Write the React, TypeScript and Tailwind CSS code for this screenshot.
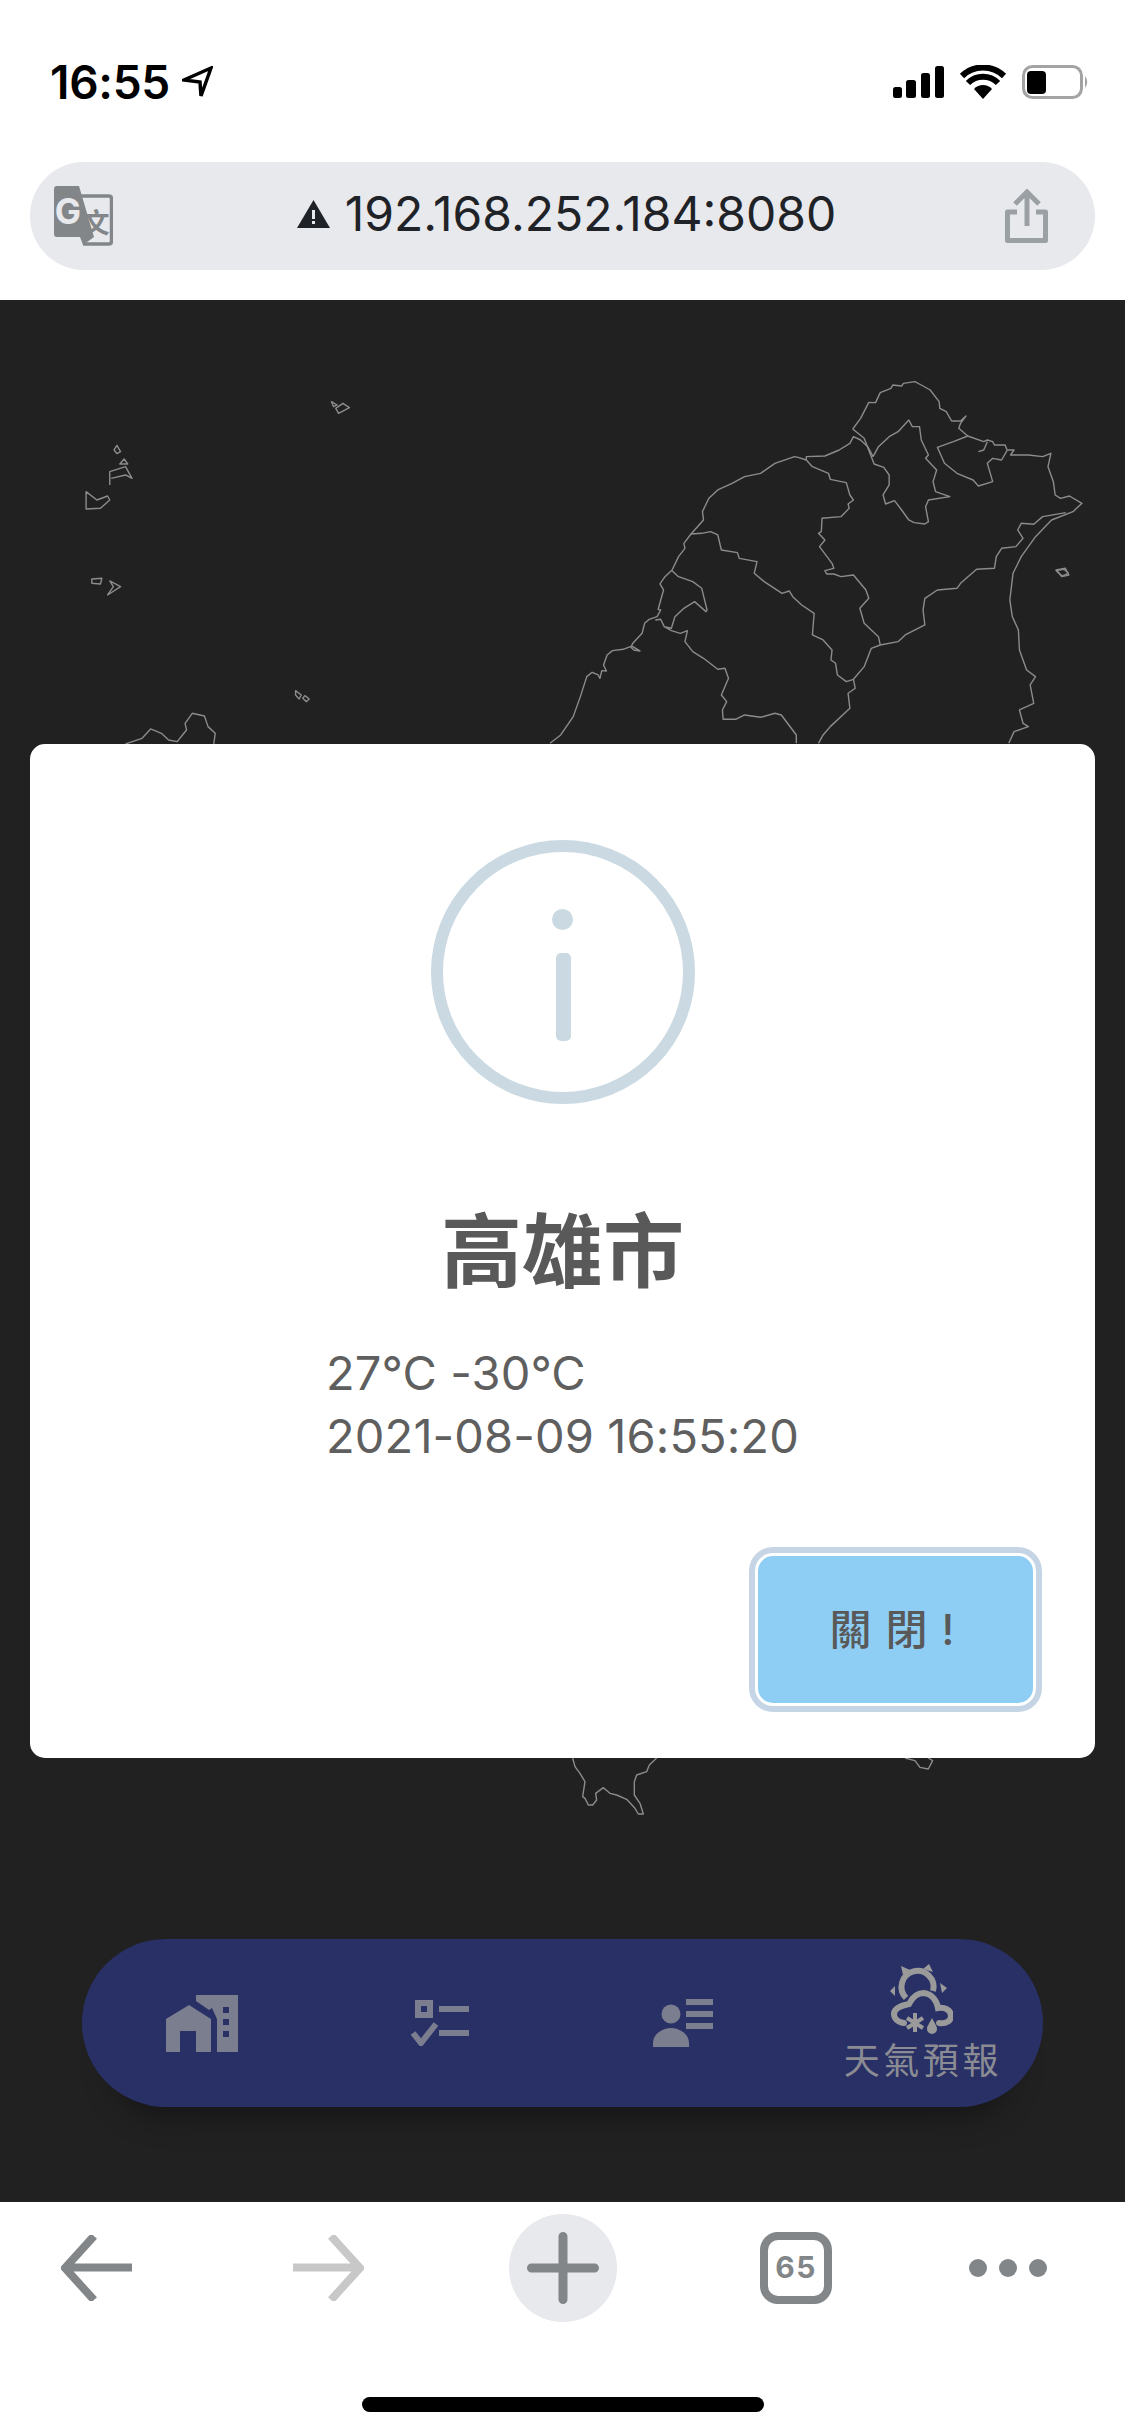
const west =
  "M0 1150 30 1125 65 1070 85 1010 103 950 118 937 135 945 140 955 145 932 158 933 150 915 160 885 175 872 205 868 225 860 235 870 252 873 228 858 232 850 258 820 265 790 278 778 300 770 310 750 303 748 318 690 308 672 322 650 342 630 360 590 378 565 375 550 395 522 430 480 427 455 445 415 470 390 510 370 545 350 590 340 630 310 685 290 695 292 718 300 718 290 770 288 810 270 840 250 850 230 870 240 890 260 905 290";
const northEast =
  "M848 207 870 175 893 127 912 128 925 98 955 85 960 75 985 78 990 70 1022 65 1040 75 1065 90 1090 125 1092 145 1110 155 1125 183 1150 183 1165 168 1150 190 1145 205 1170 228 1215 245 1225 240 1240 245 1245 255 1275 255 1280 270 1300 270 1290 285 1340 285 1380 290 1403 280 1395 320 1410 365 1415 405 1430 415 1455 408 1490 430 1465 455 1405 480 1360 530 1320 590 1297 640 1288 720 1295 770 1312 810 1315 870 1335 930 1360 950 1345 975 1355 1030 1315 1050 1325 1090 1340 1100 1300 1115 1285 1150";
const yilanLine =
  "M1445 458 1380 470 1355 493 1320 490 1310 510 1325 535 1305 560 1265 565 1250 590 1245 625 1195 628 1150 670 1140 685 1085 690 1050 715 1045 750 1050 795 995 825 975 845 925 855 900 865 880 920 850 958 830 965 805 945 800 910 787 900 790 870 765 840 735 825 740 760 705 735 680 710 670 693 650 700 600 665 572 640 580 605 530 595 525 578 480 570 470 525 450 515 425 520 395 522";
const hsinchuLine =
  "M718 300 735 320 780 340 785 358 830 368 840 405 850 420 835 432 838 445 815 470 762 475 760 515 752 520 770 540 755 560 790 610 795 625 770 632 775 642 795 642 815 650 850 645 885 690 893 715 868 745 880 790 920 830 925 855";
const taipei =
  "M905 290 920 260 950 230 975 215 1005 180 1015 200 1035 200 1040 240 1060 285 1052 295 1083 330 1073 365 1080 395 1120 410 1060 420 1052 440 1060 485 1050 492 1020 488 1005 480 985 450 965 422 940 432 933 405 950 375 950 345 935 322 908 312 900 290 880 235 848 207";
const keelung =
  "M1170 228 1130 245 1085 262 1105 310 1140 340 1185 360 1200 378 1240 365 1225 310 1240 295 1265 300 1280 272 M1225 245 1215 270 1200 275";
const miaoli =
  "M342 632 360 650 400 665 425 685 440 750 437 755 405 725 375 745 350 770 340 805 320 800 310 778 295 780 M320 800 340 812 365 820 385 812 378 845 400 875 430 895 470 928 490 925 500 955 480 1005 495 1025 483 1050 485 1078 520 1078 545 1065 590 1072 630 1060 648 1065 690 1125 690 1150 M850 958 855 985 835 1000 840 1045 785 1100 765 1125 752 1150";
const islands =
  "M462 305 470 315 465 320Z M478 310 487 323 472 340 468 325Z M163 436 168 455 163 461 159 450Z M173 477 178 492 167 492Z M153 555 153 515 175 500 184 535 175 525 155 535 M120 575 135 600 150 588 153 600 140 625 120 627Z M128 837 142 835 140 852 128 850Z M153 843 168 860 150 885 158 860Z M412 1172 420 1185 417 1197 412 1185Z M425 1187 431 1197 427 1205 422 1195Z M1472 810 1485 805 1490 825 1480 830Z M175 1332 198 1315 210 1287 225 1300 235 1320 247 1325 260 1290 258 1270 268 1240 285 1248 290 1280 300 1300 298 1332";
const south =
  "M98 54 105 80 120 100 135 125 128 170 135 175 145 195 158 195 170 180 167 160 190 143 210 160 230 165 260 178 285 205 295 222 310 222 300 190 283 165 283 125 290 105 320 95 328 75 350 54 M1095 54 1125 62 1140 82 1165 87 1178 62 1165 54";

function TaiwanMap() {
  return (
    <svg viewBox="0 300 1125 1902" className="absolute inset-0 h-full w-full" fill="none" stroke="#8c8c8c" strokeWidth="1.4" strokeLinejoin="round">
      <g transform="translate(550 360) scale(.357 .3333)">
        {[west, northEast, yilanLine, hsinchuLine, taipei, keelung, miaoli].map((d) => (
          <path key={d} d={d} vectorEffect="non-scaling-stroke" />
        ))}
        <path d="M1418 632 1440 628 1452 640 1435 648Z" vectorEffect="non-scaling-stroke" />
      </g>
      <g transform="translate(0 300) scale(.7174 .3333)">
        <path d={islands} vectorEffect="non-scaling-stroke" />
      </g>
      <g transform="translate(540 1740) scale(.3333)">
        <path d={south} vectorEffect="non-scaling-stroke" />
      </g>
    </svg>
  );
}

function StatusIcons() {
  return (
    <svg width="197" height="34" viewBox="893 65 197 34">
      <rect x="893" y="87" width="9" height="11" rx="2.5" />
      <rect x="906" y="80" width="10" height="18" rx="2.5" />
      <rect x="921" y="73" width="9" height="25" rx="2.5" />
      <rect x="935" y="66" width="9" height="32" rx="2.5" />
      <path d="M962 76a30 30 0 0 1 42 0M968 83a21 21 0 0 1 30 0" fill="none" stroke="#000" strokeWidth="6" />
      <path d="M974 89a12 12 0 0 1 18 0l-9 10z" />
      <rect x="1023.500" y="66.500" width="58" height="31" rx="9" fill="none" stroke="#a3a3a3" strokeWidth="3" />
      <rect x="1027" y="71" width="19" height="23" rx="4" />
      <path d="M1085 76q4.500 6 0 12z" fill="#a3a3a3" />
    </svg>
  );
}

function TranslateIcon() {
  return (
    <svg width="59" height="60" viewBox="0 0 59 60">
      <path d="M27 10H55Q57.500 10 57.500 13V55Q57.500 58 55 58H29" fill="none" stroke="#828689" strokeWidth="3.500" />
      <path d="M3 0H25L40 51 29 59 26 51H3Q0 51 0 48V3Q0 0 3 0Z" fill="#828689" />
      <text x="14" y="38" textAnchor="middle" fontSize="35" fontWeight="700" fill="#e8e9ed" fontFamily="Inter, sans-serif">G</text>
      <text x="42" y="47" textAnchor="middle" fontSize="27" fontWeight="700" fill="#828689" fontFamily="'Noto Sans CJK TC', sans-serif">文</text>
    </svg>
  );
}

function ShareIcon() {
  return (
    <svg width="43" height="54" viewBox="1004 185 43 54" fill="none" stroke="#9aa0a4" strokeWidth="5">
      <path d="M1026 189V222M1014 200 1026 188 1038 200" />
      <path d="M1016 208H1006.500V236.500H1044.500V208H1035" strokeLinejoin="round" />
    </svg>
  );
}

function HomeWorkIcon() {
  return (
    <svg width="72" height="57" viewBox="0 0 72 57" fill="#7a7e8f">
      <path d="M23 10 0 24V57H14V36H30V57H45V24Z" />
      <path
        fillRule="evenodd"
        d="M30 0H72V57H51V24L46 13 43 15 30 6ZM57 12V18H63V12ZM57 24V30H63V24ZM57 36V42H63V36Z"
      />
    </svg>
  );
}

function RuleIcon() {
  return (
    <svg width="60" height="46" viewBox="0 0 60 46" fill="#7a7e8f" className="-translate-x-[2px]">
      <path fillRule="evenodd" d="M5 0H23V18H5ZM11 6V12H17V6Z" />
      <rect x="29" y="6" width="30" height="6" />
      <rect x="29" y="30" width="30" height="6" />
      <path d="M3 33 11 43 26 24" fill="none" stroke="#7a7e8f" strokeWidth="6" />
    </svg>
  );
}

function ContactIcon() {
  return (
    <svg width="60" height="48" viewBox="0 0 60 48" fill="#7a7e8f">
      <circle cx="18" cy="15" r="9.500" />
      <path d="M0 48V44A18 15 0 0 1 36 44V48Z" />
      <rect x="33" y="0" width="27" height="6" />
      <rect x="33" y="12" width="27" height="6" />
      <rect x="33" y="24" width="27" height="6" />
    </svg>
  );
}

function WeatherIcon() {
  return (
    <svg width="64" height="72" viewBox="888 1965 64 72" fill="#9a9a9a" className="-translate-x-[2px]">
      <path d="M900 1968 909 1972 902 1977ZM922 1971 928 1966 932 1974ZM939 1985 946 1990 941 1995ZM889 1993 894 1988 894 1998Z" />
      <path d="M905 2000A16 16 0 1 1 932 1993" fill="none" stroke="#9a9a9a" strokeWidth="6" />
      <path
        d="M903 2025C896 2024 893 2020 893 2016 893 2011 898 2008 908 2006 912 1998 918 1995 923 1995 931 1996 936 2003 937 2010 944 2009 950 2012 950 2018 950 2023 945 2026 938 2025"
        fill="none"
        stroke="#9a9a9a"
        strokeWidth="6"
        strokeLinecap="round"
      />
      <path d="M914 2015V2034M906 2020 922 2030M922 2020 906 2030" stroke="#9a9a9a" strokeWidth="4" fill="none" />
      <path d="M931 2020C928 2026 926 2028 926 2031A5 5 0 0 0 936 2031C936 2028 934 2026 931 2020Z" />
    </svg>
  );
}

function ToolbarArrow({ flip, color }: { flip?: boolean; color: string }) {
  return (
    <svg width="71" height="66" viewBox="0 0 71 66" fill="none" stroke={color} strokeWidth="8" className={flip ? "-scale-x-100" : ""}>
      <path d="M71 32.500H6M33 1 4 33l29 32" strokeWidth="8" />
    </svg>
  );
}

export default function App() {
  return (
    <div className="flex h-[2436px] w-[1125px] flex-col overflow-hidden bg-white font-['Inter','Noto_Sans_CJK_TC',sans-serif]">
      {/* status bar + address bar */}
      <header className="h-[300px] shrink-0 bg-white">
        <div className="flex h-[162px] items-start justify-between pl-[50px] pr-[35px] pt-[65px]">
          <div className="flex items-center gap-[12px]">
            <span className="text-[46px] font-semibold leading-[34px] tracking-[-0.3px] text-black">16:55</span>
            <svg width="31" height="32" viewBox="0 0 31 32" fill="none" stroke="#000" strokeWidth="3.500">
              <path d="M29 2 2 14 18 16 19 30Z" />
            </svg>
          </div>
          <StatusIcons />
        </div>
        <div className="mx-[30px] flex h-[108px] items-center justify-between rounded-full bg-[#e8e9ed] pl-[24px] pr-[47px]">
          <TranslateIcon />
          <div className="flex flex-1 -translate-y-[2px] items-center justify-center gap-[15px] pl-[15px]">
            <svg width="33" height="28" viewBox="0 0 33 28">
              <path d="M16.500 0 33 28H0Z" fill="#1f2328" />
              <rect x="15" y="10" width="3" height="9" fill="#e8e9ed" />
              <rect x="15" y="21" width="3" height="3" fill="#e8e9ed" />
            </svg>
            <span className="text-[48px] leading-[56px] text-[#1f2328]">192.168.252.184:8080</span>
          </div>
          <ShareIcon />
        </div>
      </header>

      <main className="relative flex h-[1902px] shrink-0 flex-col justify-end bg-[#212121] px-[82px] pb-[95px]">
        <TaiwanMap />

        <nav className="relative grid h-[168px] grid-cols-4 items-center rounded-full bg-[#283066] shadow-[0_40px_30px_-30px_rgba(0,0,0,0.35)]">
          <div className="flex justify-center"><HomeWorkIcon /></div>
          <div className="flex justify-center"><RuleIcon /></div>
          <div className="flex justify-center"><ContactIcon /></div>
          <div className="flex flex-col items-center">
            <WeatherIcon />
            <span className="mt-[4px] text-[36px] leading-[44px] tracking-[3.6px] text-[#8b8c93]">天氣預報</span>
          </div>
        </nav>

        {/* alert dialog */}
        <div className="absolute inset-0 flex items-center justify-center">
          <div className="flex h-[1014px] w-[1065px] flex-col rounded-[15px] bg-white pt-[96px]">
            <div className="relative mx-auto h-[264px] w-[264px] rounded-full border-[12px] border-[#cbd9e2]">
              <div className="absolute left-[109px] top-[57px] h-[21px] w-[21px] rounded-full bg-[#cbd9e2]" />
              <div className="absolute left-[113px] top-[101px] h-[88px] w-[15px] rounded-[5px] bg-[#cbd9e2]" />
            </div>
            <h2 className="mt-[92px] text-center text-[81px] font-semibold leading-[112px] text-[#595959]">高雄市</h2>
            <div className="mt-[33px] text-center">
              <p className="inline-block text-left text-[47px] leading-[63px] tracking-[0.1px] text-[#5f5f5f]">
                27°C -30°C
                <br />
                2021-08-09 16:55:20
              </p>
            </div>
            <div className="mt-[89px] flex justify-end pr-[62px]">
              <button className="h-[147px] w-[275px] rounded-[15px] bg-[#8ecef5] pr-[6px] text-[42px] font-medium tracking-[1.4px] text-[#595959] shadow-[0_0_0_3px_#ffffff,0_0_0_9px_#c5d5e5]">
                關 閉 !
              </button>
            </div>
          </div>
        </div>
      </main>

      {/* browser toolbar */}
      <footer className="flex flex-1 flex-col bg-white">
        <div className="flex h-[120px] items-center pl-[61px] pt-[11px]">
          <ToolbarArrow color="#828689" />
          <div className="ml-[161px]"><ToolbarArrow flip color="#c8c8c8" /></div>
          <div className="ml-[145px] flex h-[108px] w-[108px] items-center justify-center rounded-full bg-[#e8e9ed]">
            <svg width="72" height="72" viewBox="0 0 72 72" stroke="#828689" strokeWidth="9" strokeLinecap="round">
              <path d="M36 4.500V67.500M4.500 36H67.500" />
            </svg>
          </div>
          <div className="ml-[143px] flex h-[72px] w-[72px] items-center justify-center rounded-[18px] border-[8px] border-[#828689] text-[30px] font-bold tracking-[1.5px] text-[#828689]">
            65
          </div>
          <div className="ml-[137px] flex gap-[12px]">
            <div className="h-[18px] w-[18px] rounded-full bg-[#828689]" />
            <div className="h-[18px] w-[18px] rounded-full bg-[#828689]" />
            <div className="h-[18px] w-[18px] rounded-full bg-[#828689]" />
          </div>
        </div>
        <div className="mx-auto mt-[75px] h-[15px] w-[402px] rounded-full bg-black" />
      </footer>
    </div>
  );
}
